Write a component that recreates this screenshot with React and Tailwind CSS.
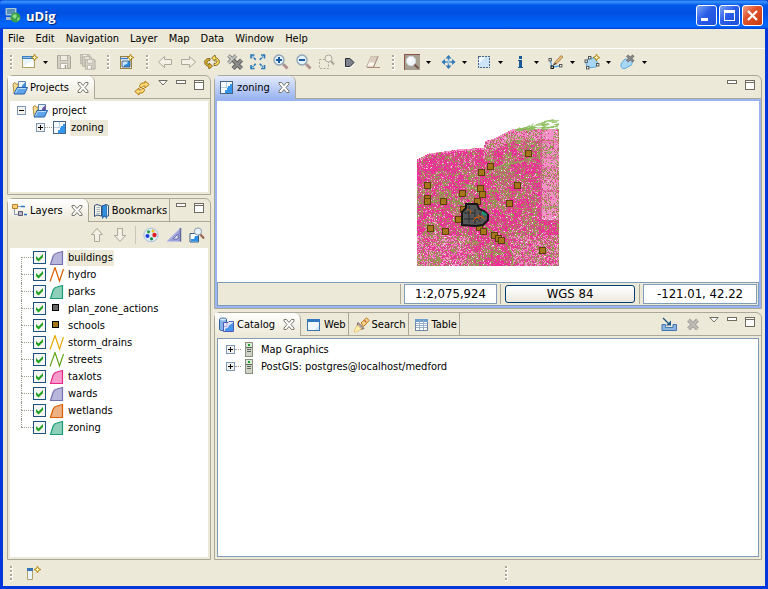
import React from "react";

/* ---------- icons ---------- */

function Icon({ children, crisp }) {
  return (
    <svg width="16" height="16" viewBox="0 0 16 16" fill="none" className="block shrink-0" shapeRendering={crisp ? "crispEdges" : undefined} aria-hidden="true">
      {children}
    </svg>
  );
}

const Sparkle = ({ x, y }) => (
  <g transform={`translate(${x} ${y})`}>
    <path d="M3.5 0L4.6 2.4L7 3.5L4.6 4.6L3.5 7L2.4 4.6L0 3.5L2.4 2.4Z" fill="#c9970e" stroke="#a87a08" strokeWidth=".6" />
    <path d="M3.5 1.8V5.2M1.8 3.5H5.2" stroke="#fff6c0" strokeWidth="1" />
  </g>
);

const NewIcon = () => (
  <Icon>
    <rect x=".5" y="2.5" width="12" height="11" fill="#e9f5fd" stroke="#b5a267" />
    <rect x="0" y="2" width="13" height="3" fill="#3f7fc0" />
    <path d="M1 3.5H12" stroke="#8dbde8" />
    <path d="M2 12L11 6V13H2Z" fill="#fff" />
    <Sparkle x={9} y={0} />
  </Icon>
);
const SaveShape = ({ x, y, s }) => (
  <g transform={`translate(${x} ${y}) scale(${s})`}>
    <path d="M.5 .5H12.5L13.5 1.5V13.5H.5Z" fill="#d3d0c4" stroke="#aca899" />
    <rect x="3.5" y=".5" width="7" height="5" fill="#efede3" stroke="#b9b6a8" />
    <rect x="3.5" y="8.5" width="7" height="5" fill="#fbfaf5" stroke="#b9b6a8" />
    <path d="M8.500 10V13" stroke="#9d9a8c" strokeWidth="1.500" />
  </g>
);
const SaveIcon = () => (<Icon><SaveShape x={0} y={1} s={1} /></Icon>);
const SaveAllIcon = () => (
  <Icon><SaveShape x={0} y={0} s={0.72} /><SaveShape x={2} y={2.500} s={0.72} /><SaveShape x={5} y={5} s={0.75} /></Icon>
);
const NewMapIcon = () => (
  <Icon>
    <rect x="1.500" y="2.500" width="11" height="12" fill="#fff" stroke="#9a8140" />
    <path d="M1 4.500H9" stroke="#3c7cbd" strokeWidth="1.500" />
    <rect x="3" y="7" width="8" height="6" fill="#cde5f8" />
    <path d="M5 13V11L8 10L9 7H11V13Z" fill="#2c8ae0" />
    <path d="M3 7H11V13H3Z" stroke="#42617f" />
    <Sparkle x={8} y={0} />
  </Icon>
);
const BackIcon = () => (<Icon><path d="M.5 8L6.500 2.500V5.500H13.500V10.500H6.500V13.500Z" fill="#f3f1e6" stroke="#aca899" /></Icon>);
const ForwardIcon = () => (<Icon><path d="M14.500 8L8.500 2.500V5.500H.5V10.500H8.500V13.500Z" fill="#f3f1e6" stroke="#aca899" /></Icon>);
const RefreshIcon = () => (
  <Icon>
    <path d="M4.500 12.500C.5 11.500 -.5 7.500 2 5.500C3 4.700 4.500 4.300 6 4.500V6.500C4 6.500 2.800 7.500 3 9C3.100 10 4 10.500 5 10.800V9L8.500 12L5 15Z" fill="#dcae28" stroke="#6b5312" strokeWidth=".8" />
    <path d="M11.500 3.500C15.500 4.500 16.500 8.500 14 10.500C13 11.300 11.500 11.700 10 11.500V9.500C12 9.500 13.200 8.500 13 7C12.900 6 12 5.500 11 5.200V7.500L7.500 4L11 1Z" fill="#ffdf5a" stroke="#6b5312" strokeWidth=".8" />
  </Icon>
);
const StopIcon = () => (
  <Icon>
    <path d="M1.500 1.500L9 9M9 1.500L1.500 9" stroke="#777" strokeWidth="3.600" />
    <path d="M1.500 1.500L9 9M9 1.500L1.500 9" stroke="#c4c4c4" strokeWidth="2" />
    <path d="M6 6L14.500 14.500M14.500 6L6 14.500" stroke="#5f5f5f" strokeWidth="4.200" />
    <path d="M6 6L14.500 14.500M14.500 6L6 14.500" stroke="#8e8e8e" strokeWidth="2.200" />
  </Icon>
);
const ExtentIcon = () => (
  <Icon>
    <path d="M1 4.500V1H4.500M11 1H14.500V4.500M14.500 11V14.500H11M4.500 14.500H1V11" stroke="#2f78b5" strokeWidth="1.600" />
    <path d="M1.500 1.500L6 6M14 1.500L9.500 6M14 14L9.500 9.500M1.500 14L6 9.500" stroke="#2f78b5" strokeWidth="1.600" strokeDasharray="2.600 .8" />
    <path d="M2 2H4L2 4ZM14 2H12L14 4ZM2 14H4L2 12ZM14 14H12L14 12Z" fill="#9fd0f0" />
  </Icon>
);
const Lens = ({ sign }) => (
  <Icon>
    <path d="M10 10L14.500 14.500" stroke="#b78d84" strokeWidth="2.800" />
    <path d="M9.500 9.500L13.500 13.500" stroke="#8d9ab5" strokeWidth="1" />
    <circle cx="6" cy="6" r="5" fill="#e2f1fb" stroke="#8ea3b5" strokeWidth="1.300" />
    <path d="M3 6H9" stroke="#1c5a9c" strokeWidth="2" />
    {sign === "+" && <path d="M6 3V9" stroke="#1c5a9c" strokeWidth="2" />}
  </Icon>
);
const ZoomSelIcon = () => (
  <Icon>
    <path d="M.5 5.500H9.500V14.500H.5Z" stroke="#aca899" strokeDasharray="2 1.500" />
    <circle cx="9.500" cy="4.500" r="3.500" fill="#f0eee3" stroke="#aca899" />
    <path d="M12 7L15 10.500" stroke="#aca899" strokeWidth="2" />
  </Icon>
);
const TagIcon = () => (
  <Icon>
    <path d="M3 13.500H8.500L13 9.500" stroke="#fff" />
    <path d="M3.500 4.500H8L12 8.500L8 12.500H3.500Z" fill="#7e838d" stroke="#2c3038" />
  </Icon>
);
const EraserIcon = () => (
  <Icon>
    <path d="M1.500 13L6 2.500H13L8.500 13Z" fill="#fdf6ee" stroke="#b8aca0" />
    <path d="M3.500 8.500L6 2.500H13L10.500 8.500Z" fill="#dccdc0" />
    <path d="M8.500 13L13 2.500" stroke="#a08c7d" strokeWidth="1" />
    <path d="M2 13.500H15" stroke="#ae8a75" />
  </Icon>
);
const ZoomToolIcon = () => (
  <Icon>
    <path d="M0 0H16V16H0Z" fill="#a5a092" />
    <path d="M.5 16V.5H16" stroke="#8a5548" strokeWidth="1" />
    <path d="M10 10L14.500 14.500" stroke="#7a5550" strokeWidth="2" />
    <circle cx="7" cy="7" r="4.700" fill="#f1f6fa" stroke="#d4dbe0" />
    <circle cx="5.800" cy="5.800" r="1.800" fill="#fff" />
  </Icon>
);
const PanIcon = () => (
  <Icon>
    <path d="M8.500 2V14M2.500 8H14.500" stroke="#3579b8" strokeWidth="1.300" />
    <path d="M8.500 1L5.500 4.500H11.500ZM8.500 15L5.500 11.500H11.500ZM1.500 8L5 5V11ZM15.500 8L12 5V11Z" fill="#3579b8" />
    <path d="M8.500 5.500V10.500M6 8H11" stroke="#b4dcf4" strokeWidth=".7" />
  </Icon>
);
const SelectIcon = () => (
  <Icon crisp><path d="M2 2H14V14H2Z" fill="#cce4f6" /><path d="M3 3H9L3 9Z" fill="#f2faff" /><path d="M2.500 2.500H13.500V13.500H2.500Z" stroke="#4a6480" strokeDasharray="2 1" /></Icon>
);
const InfoIcon = () => (
  <Icon crisp><path d="M7 2H10V5H7ZM6 6H10V13H11V14H6V13H7V7H6Z" fill="#185a98" /></Icon>
);
const Handle = ({ x, y, k = "#555" }) => <rect x={x - 1} y={y - 1} width="2.400" height="2.400" fill="#fff" stroke={k} strokeWidth="1" />;
const EditLineIcon = () => (
  <Icon>
    <path d="M2 6L4 13L12 12" stroke="#55a5e5" strokeWidth="1.300" />
    <path d="M7 8L13 1.500L15 3L9 9.500L6 10.500Z" fill="#e6b878" stroke="#a27748" strokeWidth=".8" />
    <path d="M5.500 10.500L8 9.500" stroke="#333" strokeWidth="1.300" />
    <Handle x={2} y={5.500} /><Handle x={4} y={13} k="#000" /><Handle x={12.500} y={11.500} />
  </Icon>
);
const AddPolyIcon = () => (
  <Icon>
    <path d="M2.500 6L6 4H11L14 10L12 13L4 14L2 10Z" fill="#a8d6f5" stroke="#5ea9dd" />
    <Handle x={2} y={7} /><Handle x={5.500} y={3.500} /><Handle x={13.500} y={10.500} /><Handle x={3.500} y={13.500} />
    <Sparkle x={9} y={0} />
  </Icon>
);
const DelPolyIcon = () => (
  <Icon>
    <path d="M1.500 9L5 5L13 6L11.500 11L5 14.500H2.500L.8 12Z" fill="#a8d6f5" stroke="#5ea9dd" />
    <path d="M7 1.500L13.500 7.500M13.500 1.500L7 7.500" stroke="#777" strokeWidth="3" />
    <path d="M7 1.500L13.500 7.500M13.500 1.500L7 7.500" stroke="#929292" strokeWidth="1" />
  </Icon>
);
const FolderMapIcon = ({ tint = "#3c8fe0" }) => (
  <Icon>
    <path d="M1 4L3 2.500L4 4H6V13H2Z" fill="#f6dc92" stroke="#a98536" strokeWidth=".9" />
    <path d="M6.500 1.500H13.500V9H6.500Z" fill="#e9f3fc" stroke="#6686a8" />
    <path d="M9 9L10.500 5L13.500 2V9Z" fill={tint} />
    <path d="M2 14L5 7.500H15.500L12.500 14Z" fill="#5fa5ea" stroke="#2a61aa" />
    <path d="M3.500 13L5.700 8.500H14" stroke="#b9dcfb" />
  </Icon>
);
const MapIcon = () => (
  <Icon crisp>
    <path d="M1.500 1.500H13.500V13.500H1.500Z" fill="#f8fbfe" stroke="#47637f" />
    <path d="M6 13V10H8V8H9V6H11V4H13V13Z" fill="#3296ec" />
    <path d="M7.500 2V8M2 7.500H9" stroke="#b9cfe0" />
  </Icon>
);
const LayersIcon = () => (
  <Icon>
    <path d="M.5 1.500H5.500V5.500H.5Z" fill="#f7cf7b" stroke="#b98227" />
    <path d="M2.500 6V11.500H6M6 3.500H10" stroke="#6d87a3" strokeWidth=".8" />
    <path d="M9 3.500H13M12 11.500H15" stroke="#2b77bb" strokeWidth="1.500" />
    <path d="M6.500 8.500H10.500V12.500H6.500Z" fill="#bdb9cc" stroke="#5b566e" />
  </Icon>
);
const BookIcon = () => (
  <Icon>
    <path d="M.5 2.500L3 1.500L7.500 3V13L3 12L.5 13.500Z" fill="#f5f3e6" stroke="#35537c" />
    <path d="M8 3L12 1.500L14.500 2.500V13L8 13.500Z" fill="#e7eef6" stroke="#35537c" />
    <path d="M2.500 4.500H6M2.500 6.500H6M2.500 8.500H6M2.500 10.500H6" stroke="#7d95b0" strokeWidth=".7" />
    <path d="M8.500 2.500H12.500V15.500L10.500 12.500L8.500 15.500Z" fill="#2f8fe0" stroke="#17609f" strokeWidth=".7" />
  </Icon>
);
const CatalogIcon = () => (
  <Icon>
    <path d="M.5 2.500C.5 .5 7.500 .5 7.500 2.500V12.500C7.500 14 .5 14 .5 12.500Z" fill="#83b2e6" stroke="#2c5f9e" />
    <ellipse cx="4" cy="2.500" rx="3" ry="1" fill="#d7eafb" />
    <path d="M4.500 5.500H9L10 4.500H14.500V14.500H4.500Z" fill="#dfe6fb" stroke="#4a5cb8" />
    <path d="M6 14V12L9 10.500L10.500 8L14 6V14Z" fill="#4795ea" />
    <path d="M8 6V9.500H5" stroke="#b9a8e0" />
  </Icon>
);
const WebIcon = () => (
  <Icon crisp><path d="M1.500 2.500H13.500V13.500H1.500Z" fill="#f1f9ff" stroke="#3b73ae" /><path d="M1 2H14V5H1Z" fill="#3377bd" /><path d="M9 13L13 8V13Z" fill="#cfe6f6" /></Icon>
);
const SearchIcon = () => (
  <Icon>
    <path d="M7 6L12.500 .8L15.200 3.500L9.500 9.500Z" fill="#f8d38c" stroke="#b57a25" />
    <path d="M4 5.500L10 11.500L6.500 12.500L3 9Z" fill="#b9aaa8" stroke="#7b6763" />
    <path d="M3.500 8L7.500 12L2 15H.5V13Z" fill="#fff0ae" stroke="#e4b45a" strokeWidth=".7" />
    <path d="M10.500 3.500L12 5" stroke="#c04f25" strokeWidth="1.300" />
  </Icon>
);
const TableIcon = () => (
  <Icon crisp>
    <path d="M1.500 2.500H13.500V13.500H1.500Z" fill="#fff" stroke="#7088a5" />
    <path d="M1 2H14V5H1Z" fill="#6f9fcf" />
    <path d="M2 6.500H13M2 8.500H13M2 10.500H13M5.500 3V13M9.500 3V13" stroke="#9ab0c8" />
  </Icon>
);
const SyncIcon = () => (
  <Icon>
    <path d="M15.200 4.500L11 8V6H9.500L8 7.500H6L5.500 5.500L7.500 3H11V1Z" fill="#ffd978" stroke="#b57a10" />
    <path d="M.8 11.500L5 8V10H6.500L8 8.500H10L10.500 10.500L8.500 13H5V15Z" fill="#ffd978" stroke="#b57a10" />
  </Icon>
);
const UpIcon = () => (<Icon><path d="M8 1.500L13.500 7.500H10.500V14.500H5.500V7.500H2.500Z" fill="#f3f1e6" stroke="#aca899" /></Icon>);
const DownIcon = () => (<Icon><path d="M8 14.500L13.500 8.500H10.500V1.500H5.500V8.500H2.500Z" fill="#f3f1e6" stroke="#aca899" /></Icon>);
const PaletteIcon = () => (
  <Icon>
    <ellipse cx="8" cy="8" rx="7.200" ry="6.800" fill="#ddecfa" stroke="#a9bfd8" />
    <circle cx="5.500" cy="4.800" r="1.500" fill="#1c9a32" /><circle cx="10" cy="4" r="1.500" fill="#e8c215" />
    <circle cx="4.500" cy="9" r="2" fill="#2040d8" /><circle cx="11.500" cy="8" r="2.200" fill="#df2020" />
    <circle cx="8.500" cy="11.800" r="1.600" fill="#178a48" />
  </Icon>
);
const RulerIcon = () => (
  <Icon><path d="M.8 14.500L14.500 1V14.500Z" fill="#9aa0d8" stroke="#c3c6e6" /><path d="M7 12L12 7V12Z" fill="#ece9f4" stroke="#6b70ad" /><path d="M14.500 1V14.500" stroke="#61669d" strokeWidth="1.500" /></Icon>
);
const ZoomLayerIcon = () => (
  <Icon>
    <path d="M1 6.500H9.500V15H1Z" fill="#fff" stroke="#3b5d80" />
    <path d="M2 14.500V12H5L6 9H9V14.500Z" fill="#2d90e8" />
    <path d="M11 7L15 11.500" stroke="#96604f" strokeWidth="2" />
    <circle cx="9" cy="4.500" r="3.600" fill="#e6f2fa" stroke="#8b9ba9" />
  </Icon>
);
const ImportIcon = () => (
  <Icon>
    <path d="M1 7.500H4.500V10.500H12V7.500H15.500V13.500H1Z" fill="#8eb4e0" stroke="#4275b2" />
    <path d="M2 1L8 7" stroke="#1f5280" strokeWidth="1.200" /><path d="M10 8.500V3.500L5 8.500Z" fill="#1c5b8d" />
  </Icon>
);
const RemoveIcon = () => (
  <Icon><path d="M3.500 3L12.500 12M12.500 3L3.500 12" stroke="#a7a59c" strokeWidth="4.200" /><path d="M3.500 3L12.500 12M12.500 3L3.500 12" stroke="#bdbbb3" strokeWidth="2" /></Icon>
);
const ServerIcon = () => (
  <Icon crisp>
    <path d="M4.500 .5H11.500V14.500H4.500Z" fill="#cfd3c8" stroke="#8a927f" />
    <path d="M5 1H11V5H5Z" fill="#dce9d7" /><path d="M7 2H9V4H7Z" fill="#1ca32e" />
    <path d="M5 5.500H11M6 7.500H10M6 9.500H10" stroke="#5f675d" />
  </Icon>
);
const FastViewIcon = () => (
  <Icon><path d="M.5 3.500H5.500V14.500H.5Z" fill="#e8f5fd" stroke="#b5a267" /><path d="M0 3H6V6H0Z" fill="#3675b4" /><Sparkle x={7} y={1} /></Icon>
);
const AppIcon = () => (
  <Icon>
    <path d="M1 0H11V7H1Z" fill="#c6dcea" stroke="#8fb2cc" /><path d="M2 1H10V6H2Z" fill="#578fb5" />
    <path d="M1 9H9V12H1Z" fill="#a9bac6" />
    <circle cx="10.500" cy="9.500" r="5" fill="#3aa04c" />
    <path d="M7 8L10 6L12 8L10 11ZM13 9L15 11L12 13Z" fill="#8fdf87" />
  </Icon>
);

const CloseX = () => (
  <svg width="12" height="11" viewBox="0 0 12 11" className="block" aria-hidden="true">
    <path d="M1 .5H3.500L6 3.500L8.500 .5H11V2L8 5.500L11 9V10.500H8.500L6 7.500L3.500 10.500H1V9L4 5.500L1 2Z" fill="#fff" stroke="#77746a" />
  </svg>
);
const MinIcon = () => (
  <svg width="10" height="4" className="block" shapeRendering="crispEdges" aria-hidden="true"><path d="M.5 .5H9.500V3.500H.5Z" fill="#fff" stroke="#706d60" /></svg>
);
const MaxIcon = () => (
  <svg width="10" height="10" className="block" shapeRendering="crispEdges" aria-hidden="true"><path d="M.5 .5H9.500V9.500H.5Z" fill="#fff" stroke="#706d60" /><path d="M0 2.500H10" stroke="#706d60" /></svg>
);
const ViewMenuIcon = () => (
  <svg width="10" height="6" className="block" aria-hidden="true"><path d="M.8 .5H9.200L5 5Z" fill="#fff" stroke="#706d60" /></svg>
);
const Expander = ({ open }) => (
  <button type="button" aria-label={open ? "Collapse" : "Expand"} className="block">
    <svg width="9" height="9" className="block" shapeRendering="crispEdges" aria-hidden="true">
      <path d="M.5 .5H8.500V8.500H.5Z" fill="#f4f2ea" stroke="#7b98b8" />
      <path d={open ? "M2 4.500H7" : "M2 4.500H7M4.500 2V7"} stroke="#000" />
    </svg>
  </button>
);

/* ---------- map rendering ---------- */

function buildMap() {
  let seed = 4711;
  const rnd = () => ((seed = (seed * 1664525 + 1013904223) >>> 0) / 4294967296);
  const top = [[0, 43], [13, 37], [23, 36], [43, 33], [66, 32], [68, 25], [78, 22], [85, 18], [95, 13], [142, 13]];
  const edge = (x) => {
    for (let i = 1; i < top.length; i++) {
      if (x <= top[i][0]) {
        const [a, b] = top[i - 1];
        const [c, d] = top[i];
        return Math.round(b + ((d - b) * (x - a)) / (c - a));
      }
    }
    return 13;
  };
  /* coarse value noise groups the parcels into neighbourhoods */
  const grid = Array.from({ length: 60 * 60 }, () => rnd());
  const noise = (x, y, s) => {
    const gx = x / s;
    const gy = y / s;
    const ix = Math.floor(gx);
    const iy = Math.floor(gy);
    const fx = gx - ix;
    const fy = gy - iy;
    const g = (i, j) => grid[((j + iy) % 60) * 60 + ((i + ix) % 60)];
    return (g(0, 0) * (1 - fx) + g(1, 0) * fx) * (1 - fy) + (g(0, 1) * (1 - fx) + g(1, 1) * fx) * fy;
  };
  const colors = { a: "#ee2f96", b: "#f491c6", c: "#a98a5c", d: "#8c9c4c", e: "#c9588a", w: "#f6e6ee" };
  const out = { a: "", b: "", c: "", d: "", e: "", w: "" };
  for (let y = 13; y < 150; y++) {
    for (let x = 0; x < 142; x++) {
      if (y < edge(x)) continue;
      const n = noise(x, y, 9) * 0.55 + noise(x + 40, y + 70, 3) * 0.45;
      let pink = n > 0.52 ? 0.74 : n > 0.42 ? 0.46 : 0.2;
      let light = n > 0.52 ? 0.06 : 0.14;
      let green = n > 0.52 ? 0.12 : n > 0.42 ? 0.28 : 0.5;
      if (x > 124 && y < 104) { pink = 0.04; light = n > 0.45 ? 0.78 : 0.5; green = n > 0.45 ? 0.1 : 0.32; }
      else if (y < edge(x) + 12 && x > 66) { pink = 0.1; light = 0.54; green = 0.26; }
      else if (y > 118 && (x < 52 || x > 92)) { pink *= 0.5; light = 0.34; }
      if (y - edge(x) < 2) { light = 0.7; pink = 0.2; green = 0.05; }
      const v = rnd();
      let k = v < pink ? "a" : v < pink + light ? "b" : v < pink + light + green ? (rnd() < 0.45 ? "c" : "d") : rnd() < 0.9 ? "e" : "w";
      if ((x % 3 === 1 || y % 3 === 0) && k === "a" && rnd() < 0.22) k = "e";
      if ((x % 17 === 5 || y % 17 === 7) && rnd() < 0.45) k = "c";
      out[k] += `M${x} ${y}h1v1h-1z`;
    }
  }
  let roads = "";
  for (let i = 0; i < 75; i++) {
    const t = rnd();
    const x = 98 + t * 42;
    const y = 14 - t * 12 * rnd();
    roads += `M${x.toFixed(1)} ${y.toFixed(1)}l${Math.min(142 - x, 2 + rnd() * 6).toFixed(1)} ${(-2 + rnd() * 3.500).toFixed(1)}`;
  }
  for (let i = 0; i < 70; i++) {
    const x = 70 + rnd() * 66;
    const y = 18 + rnd() * 32 + (x < 90 ? 10 : 0);
    roads += `M${x.toFixed(1)} ${y.toFixed(1)}l${(rnd() * 6).toFixed(1)} ${(-3 + rnd() * 6).toFixed(1)}`;
  }
  return { cells: Object.keys(out).map((k) => ({ k, fill: colors[k], d: out[k] })), roads };
}
const MAP = buildMap();
const SCHOOLS = [[111, 37], [73, 50], [64, 56], [100, 69], [10, 69], [63, 72], [45, 77], [65, 78], [10, 82], [10, 85], [26, 85], [60, 85], [92, 87], [46, 93], [41, 103], [13, 112], [28, 115], [62, 111], [66, 115], [77, 119], [81, 122], [84, 124], [125, 134]];

function MapCanvas() {
  return (
    <svg width="143" height="150" viewBox="0 0 143 150" className="block" role="img" aria-label="zoning map">
      <g shapeRendering="crispEdges">
        {MAP.cells.map((m) => <path key={m.k} d={m.d} fill={m.fill} />)}
      </g>
      <path d={MAP.roads} stroke="#86bb55" strokeWidth=".8" fill="none" />
      <path d="M0 88L14 86L28 84L42 86L58 96L70 112L84 121L92 132L96 140L95 150" fill="none" stroke="#7aa83c" strokeWidth="1.100" />
      <path d="M80 51L102 46L118 41M124 91H142M62 60V80M45 71L56 69M46 67L60 74" fill="none" stroke="#7fae48" strokeWidth="1.200" />
      <path d="M124 13V105M124 26H142M124 42H142M124 52H142M124 75H142M107 13V35" fill="none" stroke="#e0569f" strokeWidth=".8" />
      {SCHOOLS.map(([x, y], i) => <rect key={i} x={x - 3 + 0.5} y={y - 3 + 0.5} width="6" height="6" fill="#a6761d" stroke="#5f400c" shapeRendering="crispEdges" />)}
      <path d="M49 88H60L62 93L67 95L71 99V104L66 109L59 110L45 109V96L49 92Z" fill="#555759" stroke="#161616" strokeWidth="2" />
      <path d="M47 97H58M52 90V107M47 103H64M58 93V108M63 96V106" stroke="#2b2b2b" strokeWidth="1" />
      <path d="M50 93L54 95L53 98M56 105L60 101L64 104M61 99L68 103M57 102L66 100" stroke="#c85c14" strokeWidth="1" fill="none" />
      <path d="M65 95L70 98L69 100L65 98Z" fill="#159a7a" />
    </svg>
  );
}

/* ---------- building blocks ---------- */

function Grip() {
  return (
    <div className="flex w-4 shrink-0 flex-col gap-px pl-[7px]">
      {[0, 1, 2, 3].map((i) => (
        <span key={i} className="block size-[3px] border-r border-b border-white bg-[#aba899]" />
      ))}
    </div>
  );
}
function ToolButton({ icon, label }) {
  return <button type="button" aria-label={label} className="flex h-6 w-[23px] shrink-0 items-center pl-[3px]">{icon}</button>;
}
function Arrow({ label }) {
  return (
    <button type="button" aria-label={label} className="flex h-6 w-3 shrink-0 items-center pl-px">
      <svg width="5" height="3" className="block" aria-hidden="true"><path d="M0 0H5L2.500 3Z" fill="#000" /></svg>
    </button>
  );
}
function ToolMenu({ icon, label }) {
  return (
    <div className="flex shrink-0">
      <button type="button" aria-label={label} className="flex h-6 w-6 items-center pl-[3px]">{icon}</button>
      <Arrow label={`${label} options`} />
    </div>
  );
}
function ActiveTab({ icon, children, blue }) {
  return (
    <div className={`flex shrink-0 items-center rounded-tr-md border-r border-[#aca899] pl-1 pr-[5px] ${blue ? "bg-gradient-to-b from-[#e4ebfb] to-[#99b4f0]" : "bg-gradient-to-b from-white to-[#ece9d8]"}`}>
      <button type="button" className="flex items-center gap-0.5 pt-px">{icon}<span>{children}</span></button>
      <button type="button" aria-label={`Close ${children}`} className="ml-2"><CloseX /></button>
    </div>
  );
}
function Tab({ icon, children }) {
  return (
    <button type="button" className="flex shrink-0 items-center gap-0.5 border-r border-b border-[#aca899] pt-0.5 pr-0.5 pl-[5px]">
      {icon}<span>{children}</span>
    </button>
  );
}
function PanelControls({ children }) {
  return (
    <div className="flex flex-1 items-start justify-end gap-2 border-b border-[#aca899] pt-1 pr-1.5">
      {children}
      <button type="button" aria-label="Minimize view"><MinIcon /></button>
      <button type="button" aria-label="Maximize view"><MaxIcon /></button>
    </div>
  );
}
const ViewMenu = () => <button type="button" aria-label="View menu"><ViewMenuIcon /></button>;

/* ---------- layers ---------- */

const POLY = "M1.500 14.500L4 6.500Q5 3.500 8 3L13.500 1.500V14.500Z";
const LINE = "M1 14.500L6 .5L10.500 14L14.500 2";
const LAYERS = [
  ["buildings", "poly", "#b9b6dc", "#7570b3"],
  ["hydro", "line", "none", "#d95f02"],
  ["parks", "poly", "#8ecfba", "#1b9e77"],
  ["plan_zone_actions", "point", "#666666", "#000000"],
  ["schools", "point", "#a6761d", "#000000"],
  ["storm_drains", "line", "none", "#e6ab02"],
  ["streets", "line", "none", "#66a61e"],
  ["taxlots", "poly", "#f59acb", "#e7298a"],
  ["wards", "poly", "#b9b6dc", "#7570b3"],
  ["wetlands", "poly", "#edb083", "#d95f02"],
  ["zoning", "poly", "#8ecfba", "#1b9e77"],
];

function LayerGlyph({ kind, fill, stroke }) {
  if (kind === "point") return <Icon crisp><rect x="3.500" y="3.500" width="6" height="6" fill={fill} stroke={stroke} /></Icon>;
  return <Icon><path d={kind === "poly" ? POLY : LINE} fill={fill} stroke={stroke} strokeWidth="1.200" /></Icon>;
}

function LayerRow({ layer, first, last }) {
  const [name, kind, fill, stroke] = layer;
  return (
    <li className="flex h-[17px] items-center pl-[11px]">
      <span className="flex h-full w-3 flex-col">
        <span className={`h-2 border-dotted border-[#9d9a8c] ${first ? "" : "border-l"}`} />
        <span className={`flex-1 border-t border-dotted border-[#9d9a8c] ${last ? "" : "border-l"}`} />
      </span>
      <label className="flex items-center">
        <span className="relative block size-[13px]">
          <input type="checkbox" defaultChecked className="peer block size-[13px] appearance-none border border-[#1c5180] bg-[#f5f5f1]" />
          <svg width="13" height="13" className="pointer-events-none absolute inset-0 hidden peer-checked:block" aria-hidden="true">
            <path d="M3 5V8L5.500 10.500L10 6V3L5.500 7.500Z" fill="#21a121" />
          </svg>
        </span>
        <span className="ml-[3px]"><LayerGlyph kind={kind} fill={fill} stroke={stroke} /></span>
        <span className={`ml-0.5 h-4 px-px leading-4 ${first ? "bg-[#ece9d8]" : ""}`}>{name}</span>
      </label>
    </li>
  );
}

/* ---------- window ---------- */

function TitleBar() {
  const base = "flex size-[21px] items-center justify-center rounded-[3px] border border-white";
  return (
    <header className="flex h-[29px] shrink-0 items-center rounded-t-[4px] bg-[linear-gradient(180deg,#0a5be0_0%,#3b93ff_6%,#0058ea_18%,#0050e0_45%,#0064fb_80%,#0066ff_92%,#003fd0_100%)] pt-0.5 pr-[5px] pl-[5px]">
      <AppIcon />
      <h1 className="ml-[5px] flex-1 font-['Open_Sans',sans-serif] text-[13px] leading-5 font-bold text-white [text-shadow:1px_1px_1px_#0a246a]">uDig</h1>
      <div className="flex gap-0.5">
        <button type="button" aria-label="Minimize" className={`${base} bg-[linear-gradient(135deg,#7fa5f5,#2a5ee8_45%,#1f4fd8)]`}>
          <svg width="13" height="13" aria-hidden="true"><path d="M1 9H8V12H1Z" fill="#fff" /></svg>
        </button>
        <button type="button" aria-label="Maximize" className={`${base} bg-[linear-gradient(135deg,#7fa5f5,#2a5ee8_45%,#1f4fd8)]`}>
          <svg width="13" height="13" shapeRendering="crispEdges" aria-hidden="true"><path d="M1.500 2V11.500H11.500V2" fill="none" stroke="#fff" /><path d="M1 1H12V4H1Z" fill="#fff" /></svg>
        </button>
        <button type="button" aria-label="Close" className={`${base} bg-[linear-gradient(135deg,#f0a08a,#e0532c_40%,#c93a10)]`}>
          <svg width="13" height="13" aria-hidden="true"><path d="M2 2L11 11M11 2L2 11" stroke="#fff" strokeWidth="2.200" /></svg>
        </button>
      </div>
    </header>
  );
}

function ToolBar() {
  return (
    <div className="flex h-[26px] shrink-0 items-center" role="toolbar">
      <Grip />
      <ToolButton icon={<NewIcon />} label="New" />
      <Arrow label="New options" />
      <ToolButton icon={<SaveIcon />} label="Save" />
      <ToolButton icon={<SaveAllIcon />} label="Save all" />
      <Grip />
      <ToolButton icon={<NewMapIcon />} label="New map" />
      <Grip />
      <ToolButton icon={<BackIcon />} label="Back" />
      <ToolButton icon={<ForwardIcon />} label="Forward" />
      <ToolButton icon={<RefreshIcon />} label="Refresh" />
      <ToolButton icon={<StopIcon />} label="Stop rendering" />
      <ToolButton icon={<ExtentIcon />} label="Show all" />
      <ToolButton icon={<Lens sign="+" />} label="Zoom in" />
      <ToolButton icon={<Lens sign="-" />} label="Zoom out" />
      <ToolButton icon={<ZoomSelIcon />} label="Zoom to selection" />
      <ToolButton icon={<TagIcon />} label="Commit" />
      <ToolButton icon={<EraserIcon />} label="Clear selection" />
      <Grip />
      <ToolMenu icon={<ZoomToolIcon />} label="Zoom" />
      <ToolMenu icon={<PanIcon />} label="Pan" />
      <ToolMenu icon={<SelectIcon />} label="Select" />
      <ToolMenu icon={<InfoIcon />} label="Info" />
      <ToolMenu icon={<EditLineIcon />} label="Edit geometry" />
      <ToolMenu icon={<AddPolyIcon />} label="Create geometry" />
      <ToolMenu icon={<DelPolyIcon />} label="Delete geometry" />
    </div>
  );
}

function ProjectsPanel() {
  return (
    <section className="flex h-[120px] flex-col rounded-t-md border border-[#aca899]">
      <div className="flex h-[23px] shrink-0">
        <ActiveTab icon={<FolderMapIcon />}>Projects</ActiveTab>
        <PanelControls>
          <button type="button" aria-label="Link with editor"><SyncIcon /></button>
          <ViewMenu />
        </PanelControls>
      </div>
      <ul className="m-0.5 flex-1 bg-white pt-px">
        <li>
          <div className="flex h-[17px] items-center pl-[7px]">
            <Expander open />
            <span className="ml-1.5"><FolderMapIcon tint="#6a4fa8" /></span>
            <span className="ml-1">project</span>
          </div>
          <ul>
            <li className="flex h-[17px] items-center pl-[26px]">
              <Expander />
              <span className="w-[7px] border-t border-dotted border-[#9d9a8c]" />
              <MapIcon />
              <span className="ml-0.5 h-4 bg-[#ece9d8] pr-1 pl-px leading-4">zoning</span>
            </li>
          </ul>
        </li>
      </ul>
    </section>
  );
}

function LayersPanel() {
  return (
    <section className="flex flex-1 flex-col rounded-t-md border border-[#aca899]">
      <div className="flex h-[23px] shrink-0">
        <ActiveTab icon={<LayersIcon />}>Layers</ActiveTab>
        <Tab icon={<BookIcon />}>Bookmarks</Tab>
        <PanelControls />
      </div>
      <div className="flex h-[26px] shrink-0 items-center justify-end gap-[7px] pr-[5px]">
        <button type="button" aria-label="Move up"><UpIcon /></button>
        <button type="button" aria-label="Move down"><DownIcon /></button>
        <span className="h-[18px] w-px bg-[#c9c6b6]" />
        <button type="button" aria-label="Style"><PaletteIcon /></button>
        <button type="button" aria-label="Measure"><RulerIcon /></button>
        <button type="button" aria-label="Zoom to layer"><ZoomLayerIcon /></button>
      </div>
      <ul className="mx-0.5 mb-0.5 flex-1 bg-white pt-px">
        {LAYERS.map((l, i) => <LayerRow key={l[0]} layer={l} first={i === 0} last={i === LAYERS.length - 1} />)}
      </ul>
    </section>
  );
}

function EditorPanel() {
  return (
    <section className="flex h-[234px] flex-col rounded-t-md border border-[#aca899]">
      <div className="flex h-[23px] shrink-0">
        <ActiveTab icon={<MapIcon />} blue>zoning</ActiveTab>
        <PanelControls />
      </div>
      <div className="flex flex-1 flex-col bg-[#99b4f0] p-0.5">
        <div className="flex flex-1 items-center justify-center bg-white pb-0.5">
          <MapCanvas />
        </div>
        <div className="flex h-6 items-stretch gap-[3px] border border-[#7f9db9] bg-[#ece9d8] py-px pr-px text-[13px]">
          <div className="flex-1 border-r border-[#aca899]" />
          <input aria-label="Scale" defaultValue="1:2,075,924" className="w-[93px] border border-[#7f9db9] bg-white text-center" />
          <span className="w-px bg-[#aca899]" />
          <button type="button" className="mx-px my-px w-[130px] rounded-[3px] border border-[#003c74] bg-gradient-to-b from-white to-[#ece9df]">WGS 84</button>
          <span className="w-px bg-[#aca899]" />
          <output className="flex w-[114px] items-center justify-center border border-[#7f9db9] bg-white">-121.01, 42.22</output>
        </div>
      </div>
    </section>
  );
}

function CatalogPanel() {
  const items = ["Map Graphics", "PostGIS: postgres@localhost/medford"];
  return (
    <section className="flex flex-1 flex-col rounded-t-md border border-[#aca899]">
      <div className="flex h-[23px] shrink-0">
        <ActiveTab icon={<CatalogIcon />}>Catalog</ActiveTab>
        <Tab icon={<WebIcon />}>Web</Tab>
        <Tab icon={<SearchIcon />}>Search</Tab>
        <Tab icon={<TableIcon />}>Table</Tab>
        <PanelControls>
          <button type="button" aria-label="Import"><ImportIcon /></button>
          <button type="button" aria-label="Remove"><RemoveIcon /></button>
          <ViewMenu />
        </PanelControls>
      </div>
      <ul className="m-0.5 flex-1 border border-[#7f9db9] bg-white pt-0.5">
        {items.map((t) => (
          <li key={t} className="flex h-[17px] items-center pl-2">
            <Expander />
            <span className="w-[6px] border-t border-dotted border-[#9d9a8c]" />
            <ServerIcon />
            <span className="ml-1">{t}</span>
          </li>
        ))}
      </ul>
    </section>
  );
}

export default function App() {
  const menus = ["File", "Edit", "Navigation", "Layer", "Map", "Data", "Window", "Help"];
  return (
    <div className="flex min-h-screen flex-col bg-[#0842d8] font-['DejaVu_Sans_Condensed','DejaVu_Sans',sans-serif] text-[11px] leading-[14px] text-black">
      <TitleBar />
      <div className="flex flex-1 flex-col border-x-[3px] border-b-[3px] border-[#0038dc] bg-[#ece9d8]">
        <nav className="flex h-5 shrink-0 items-center gap-[11px] border-b border-white pl-[5px]">
          {menus.map((m) => <button type="button" key={m}>{m}</button>)}
        </nav>
        <ToolBar />
        <main className="flex flex-1 gap-[3px] pr-[3px] pl-1">
          <div className="flex w-[204px] shrink-0 flex-col gap-[3px]">
            <ProjectsPanel />
            <LayersPanel />
          </div>
          <div className="flex min-w-0 flex-1 flex-col gap-[3px]">
            <EditorPanel />
            <CatalogPanel />
          </div>
        </main>
        <footer className="flex h-[26px] shrink-0 items-center">
          <div className="flex flex-1 items-center gap-2">
            <Grip />
            <button type="button" aria-label="Show view as fast view"><FastViewIcon /></button>
          </div>
          <div className="flex w-[267px] items-center"><Grip /></div>
        </footer>
      </div>
    </div>
  );
}
